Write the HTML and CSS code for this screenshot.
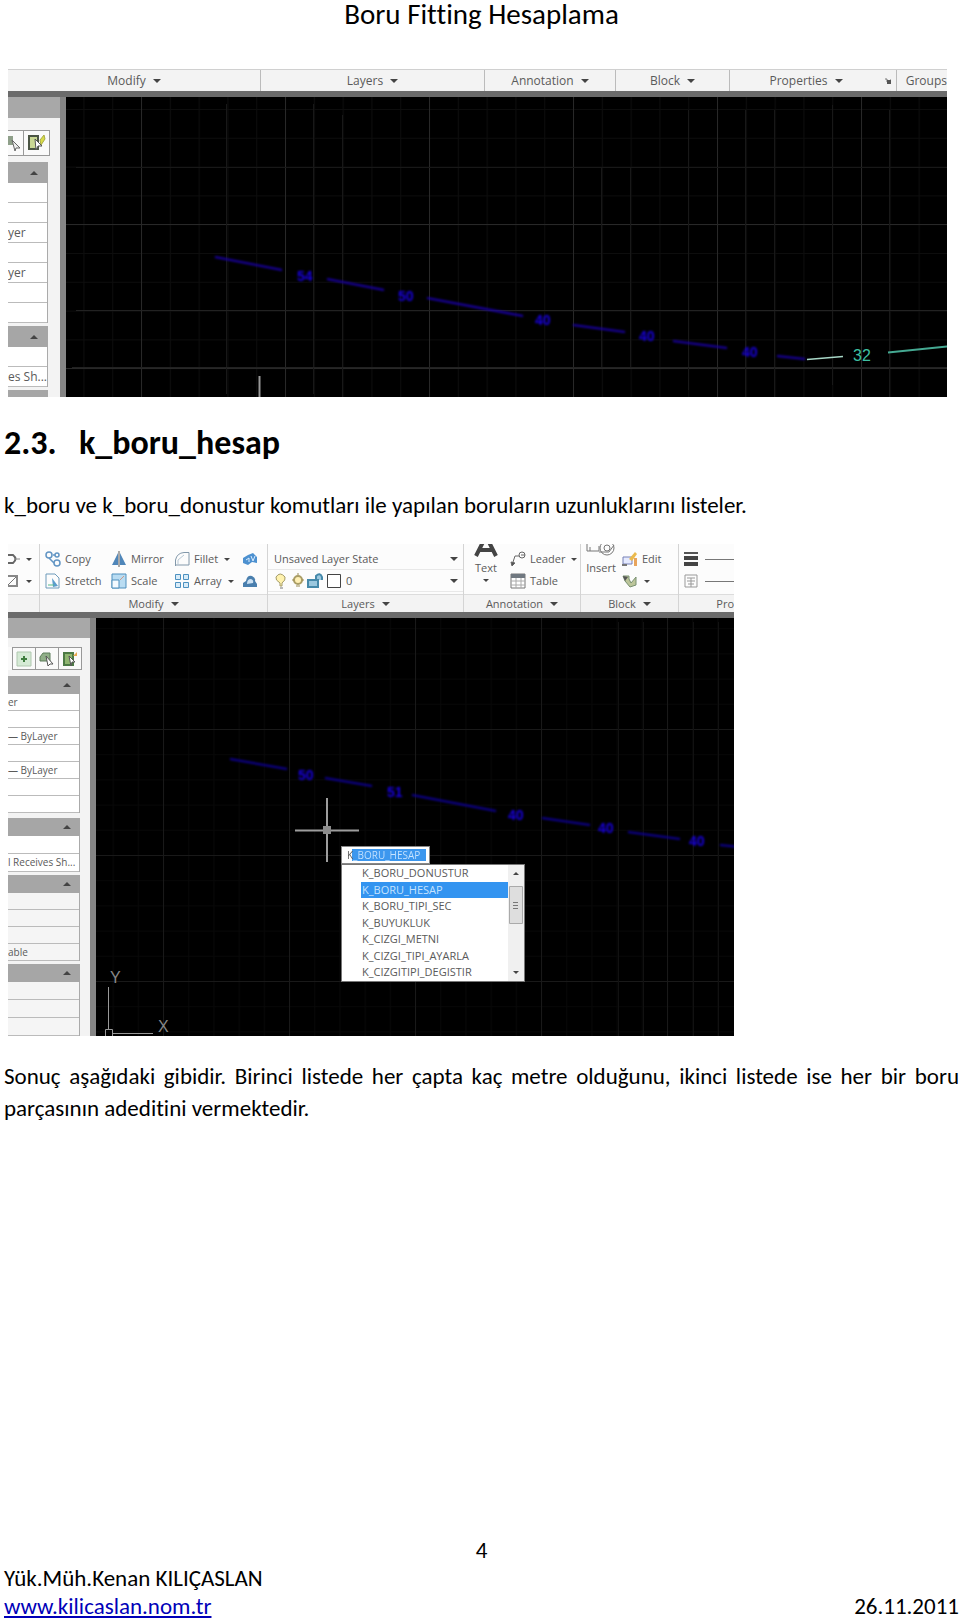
FILE: index.html
```html
<!DOCTYPE html>
<html lang="tr">
<head>
<meta charset="utf-8">
<meta name="viewport" content="width=device-width, initial-scale=1">
<title>Boru Fitting Hesaplama</title>
<link rel="stylesheet" href="styles.css">
</head>
<body>
<div class="page">
  <header class="page-head">Boru Fitting Hesaplama</header>
  <main>
    <figure class="shot shot-wide">
      <div class="ribbon ribbon-titles">
        <button class="title">Modify<i class="caret"></i></button>
        <button class="title">Layers<i class="caret"></i></button>
        <button class="title">Annotation<i class="caret"></i></button>
        <button class="title">Block<i class="caret"></i></button>
        <button class="title w-properties">Properties<i class="caret"></i><svg class="launcher" width="6" height="6"><path d="M0 1h2v3h4V1" fill="none" stroke="#777"/><path d="M2 2h4v4H2z" fill="#555"/></svg></button>
        <button class="title w-groups">Groups</button>
      </div>
      <div class="workspace">
        <aside class="palette palette-narrow">
          <div class="palette-bar"></div>
          <div class="tools">
            <button class="tool tool-cut" aria-label="Select objects"><svg width="14" height="18"><path d="M0 2h5v9H0z" fill="#8fa08a"/><path d="M4 6l8 8-4 0-1 3z" fill="#eee" stroke="#666"/></svg></button>
            <button class="tool" aria-label="Quick select"><svg width="18" height="18"><path d="M1 2h9v13H1z" fill="#c9d894" stroke="#4b5544" stroke-width="2"/><path d="M12 6l4-5 1 4-4 6z" fill="#d9dc4a" stroke="#a8ab44"/><path d="M7 5l7 7-4 0-2 4z" fill="#fff" stroke="#555"/></svg></button>
          </div>
          <div class="group-head"><i class="caret up"></i></div>
          <ul class="rows"><li></li><li></li><li><span>yer</span></li><li></li><li><span>yer</span></li><li></li><li></li></ul>
          <div class="group-head"><i class="caret up"></i></div>
          <ul class="rows"><li></li><li><span>es Sh...</span></li></ul>
          <div class="group-head"></div>
        </aside>
        <div class="canvas">
          <svg class="drawing" role="img" aria-label="Pipe drawing">
            <defs>
              <pattern id="minor-a" x="141" y="109" width="28.8" height="28.8" patternUnits="userSpaceOnUse"><path d="M0 .5h29M.5 0v29" stroke="#0d0d0d"/></pattern>
              <pattern id="major-a" x="141" y="80" width="144" height="144" patternUnits="userSpaceOnUse"><path d="M0 .5h144M.5 0v144" stroke="#282828"/></pattern>
            </defs>
            <g transform="translate(-66 -97)">
              <path d="M66 97h3000v400H66z" fill="#000"/>
              <path d="M66 97h3000v400H66z" fill="url(#minor-a)"/>
              <path d="M66 97h3000v400H66z" fill="url(#major-a)"/>
              <path d="M226.500 104v290M313.500 104v290M342.500 115v290M601.500 168v200M630.500 168v200M688.500 110v280M745.500 110v290M774.500 110v290M832.500 105v280M889.500 110v290" stroke="#181818" fill="none"/>
              <path d="M76 310.500h3000M72 367.500h3000" stroke="#222" fill="none"/>
              <path d="M76 167.500h3000" stroke="#181818" fill="none"/>
              <g class="soft">
                <path d="M215 257l67 13M327 279l57 11M427 298l96 18M573 325l52 7M673 341l54 7M777 356l28 3" stroke="#1a00a8" stroke-width="2" fill="none"/>
                <g class="pipe-label"><text x="297" y="281">54</text><text x="398" y="301">50</text><text x="535" y="325">40</text><text x="639" y="341">40</text><text x="742" y="357">40</text></g>
              </g>
              <path d="M807 359.500l36-3" stroke="#a8d8c8" stroke-width="1.500"/>
              <path d="M888 352.500l59-6 200-20" stroke="#45a992" stroke-width="2" fill="none"/>
              <text x="853" y="361" class="teal-label">32</text>
              <path d="M259.500 376v30" stroke="#999" stroke-width="2"/>
            </g>
          </svg>
        </div>
      </div>
    </figure>

    <h2><span class="num">2.3.</span>k_boru_hesap</h2>
    <p class="lead">k_boru ve k_boru_donustur komutları ile yapılan boruların uzunluklarını listeler.</p>

    <figure class="shot shot-small">
      <div class="ribbon ribbon-full">
        <section class="panel p-edge">
          <div class="panel-body stack">
            <button class="cmd" aria-label="Rotate"><svg width="12" height="16"><path d="M0 4h5q5 4 0 8H0" fill="none" stroke="#666" stroke-width="2"/><path d="M6 8h6" stroke="#888"/></svg><i class="caret tiny"></i></button>
            <button class="cmd" aria-label="Trim"><svg width="12" height="16"><path d="M0 3h9v10H0" fill="none" stroke="#888" stroke-width="2"/><path d="M0 12l8-8" stroke="#777"/></svg><i class="caret tiny"></i></button>
          </div>
          <div class="title"></div>
        </section>
        <section class="panel p-modify">
          <div class="panel-body modify-grid">
            <button class="cmd"><svg width="16" height="16" fill="none" stroke="#6295c4" stroke-width="1.500"><circle cx="4" cy="4" r="3"/><circle cx="12" cy="4" r="2"/><circle cx="12" cy="12" r="3"/><path d="M4 7l5 5M8 4h2"/></svg>Copy</button>
            <button class="cmd"><svg width="16" height="16"><path d="M7 2v12H1zM9 2v12h6z" fill="#4f86b9"/><path d="M8 0v16" stroke="#555"/></svg>Mirror</button>
            <button class="cmd"><svg width="16" height="16" fill="none" stroke="#8298aa"><path d="M1.500 15V9Q3 2 10 1.500h5V14h-14"/><path d="M4 14V9l6-5" stroke="#b8c8d4"/></svg>Fillet<i class="caret tiny"></i></button>
            <button class="cmd" aria-label="Explode"><svg width="16" height="16"><path d="M1 7l5-3 5-2 4 4v6l-5-1-4 3-5-2z" fill="#4d91d0"/><path d="M4 9l3-2v4M9 5l2 5 2-5" stroke="#dceeff" fill="none"/></svg></button>
            <button class="cmd"><svg width="16" height="16" fill="none"><path d="M1 1h9l4 4v10H1z" stroke="#6d9aba"/><path d="M7 5l6 8-5 1z" fill="#5c9dcc"/><path d="M3 12h6" stroke="#5b8"/></svg>Stretch</button>
            <button class="cmd"><svg width="16" height="16" fill="none"><path d="M1 1h14v14H1z" fill="#b9dcf2" stroke="#4f8fbd"/><path d="M1 7h7v8H1z" fill="#f4faff" stroke="#4f8fbd"/><path d="M9 7l4-4" stroke="#c98"/></svg>Scale</button>
            <button class="cmd"><svg width="16" height="16" fill="#d9ecf8" stroke="#4d91c0"><path d="M1.500 1.500h5v5h-5zM9.500 1.500h5v5h-5zM1.500 9.500h5v5h-5zM9.500 9.500h5v5h-5z"/></svg>Array<i class="caret tiny"></i></button>
            <button class="cmd" aria-label="Offset"><svg width="16" height="16"><path d="M1 14v-4l3-2q1-6 6-5 4 2 3 5l2 3v3z" fill="#4a7fae"/><path d="M5 11q0-5 4-5 3 1 2 4z" fill="#cde2f4"/></svg></button>
          </div>
          <button class="title">Modify<i class="caret"></i></button>
        </section>
        <section class="panel p-layers">
          <div class="panel-body stack">
            <div class="combo"><select aria-label="Layer state"><option>Unsaved Layer State</option></select><i class="caret"></i></div>
            <button class="combo layer-combo">
              <svg width="68" height="16" fill="none"><path d="M6 13V10Q1 7 2 4q4-6 9 0 1 3-3 6v3z" fill="#fff2ae" stroke="#a49b69"/><path d="M6 15h3" stroke="#777"/><circle cx="24" cy="7" r="4" fill="#fff0b5" stroke="#aa9d65" stroke-width="2"/><path d="M22 13h4M24 0v2M18 7h2M28 7h2" stroke="#998b55"/><path d="M34 7h10v7H34zM42 7V3q4-4 6 1v3" fill="#9bc8df" stroke="#4689aa" stroke-width="2"/><path d="M53.500 1.500h13v13h-13z" fill="#fff" stroke="#444"/></svg>
              <span>0</span><i class="caret"></i>
            </button>
          </div>
          <button class="title">Layers<i class="caret"></i></button>
        </section>
        <section class="panel p-annotation">
          <div class="panel-body split">
            <button class="big"><svg width="24" height="13"><path d="M2 12L9-2h6l7 14M6 6h12" fill="none" stroke="#444" stroke-width="4"/></svg>Text<i class="caret tiny"></i></button>
            <div class="stack">
              <button class="cmd"><svg width="16" height="16" fill="none" stroke="#666"><path d="M2 14L5 5h4"/><path d="M1 11l1 4 3-3z" fill="#555"/><circle cx="12" cy="4" r="3"/><path d="M11 4h4"/></svg>Leader<i class="caret tiny"></i></button>
              <button class="cmd"><svg width="16" height="16"><path d="M1 1h14v14H1z" fill="#fff" stroke="#777"/><path d="M1 1h14v4H1z" fill="#707880"/><path d="M1 8h14M1 12h14M6 5v10M11 5v10" stroke="#aaa"/></svg>Table</button>
            </div>
          </div>
          <button class="title">Annotation<i class="caret"></i></button>
        </section>
        <section class="panel p-block">
          <div class="panel-body split">
            <button class="big"><svg width="30" height="13" fill="none" stroke="#777"><path d="M1 0v7h12V2M4 7V3"/><circle cx="21" cy="4" r="7"/><circle cx="21" cy="4" r="3"/><path d="M13 8h10l5-7"/></svg>Insert</button>
            <div class="stack">
              <button class="cmd"><svg width="16" height="16"><path d="M1 6h9v7H1z" fill="#e5eaff" stroke="#7780b5"/><path d="M7 8l6-7 2 2-5 7z" fill="#ebba4c"/><path d="M12 7v8h3V7z" fill="#e8a45c"/><path d="M0 14h5" stroke="#777" stroke-width="2"/></svg>Edit</button>
              <button class="cmd" aria-label="Attributes"><svg width="16" height="16"><path d="M1 3h6v3l2 4 5-6v8l-6 2-5-6z" fill="#bcc59a" stroke="#789070"/><path d="M1 3l5 1-3 4z" fill="#555"/></svg><i class="caret tiny"></i></button>
            </div>
          </div>
          <button class="title">Block<i class="caret"></i></button>
        </section>
        <section class="panel p-properties">
          <div class="panel-body stack">
            <button class="cmd prop" aria-label="Line weight"><svg width="14" height="16"><path d="M0 2h14" stroke="#555" stroke-width="2"/><path d="M0 7h14M0 13h14" stroke="#444" stroke-width="4"/></svg><i class="rule"></i></button>
            <button class="cmd prop" aria-label="Line type"><svg width="14" height="16" fill="none" stroke="#999"><path d="M1 2h12v12H1zM3 5h8M3 8h8M7 5v9M4 11h6"/></svg><i class="rule"></i></button>
          </div>
          <button class="title at-end">Pro</button>
        </section>
      </div>
      <div class="workspace">
        <aside class="palette palette-mid">
          <div class="palette-bar"></div>
          <div class="tools">
            <button class="tool tool-sliver" aria-label="Toggle"></button>
            <button class="tool" aria-label="Pick add"><svg width="16" height="16"><path d="M1 1h14v14H1z" fill="#d5ead5" stroke="#b0c8b0"/><path d="M8 5v6M5 8h6" stroke="#3f7d3f" stroke-width="2"/></svg></button>
            <button class="tool" aria-label="Select objects"><svg width="16" height="16"><path d="M4 2h7v8H1V6z" fill="#8fae87" stroke="#5d7d5a"/><path d="M7 5l7 8-3 0-2 2z" fill="#fff" stroke="#555"/></svg></button>
            <button class="tool" aria-label="Quick select"><svg width="16" height="16"><path d="M2 2h9v12H2z" fill="#8fb570" stroke="#4c7a44" stroke-width="2"/><path d="M11 5l4-4v4z" fill="#e8a850"/><path d="M7 5l6 6-3 0-1 4z" fill="#fff" stroke="#555"/></svg></button>
          </div>
          <div class="group-head"><i class="caret up"></i></div>
          <ul class="rows dense loose"><li><span>er</span></li><li></li><li><span>— ByLayer</span></li><li></li><li><span>— ByLayer</span></li><li></li><li></li></ul>
          <div class="group-head"><i class="caret up"></i></div>
          <ul class="rows"><li></li><li><span>l Receives Sh...</span></li></ul>
          <div class="group-head"><i class="caret up"></i></div>
          <ul class="rows dense shaded"><li></li><li></li><li></li><li><span>able</span></li></ul>
          <div class="group-head"><i class="caret up"></i></div>
          <ul class="rows shaded"><li></li><li></li><li></li></ul>
        </aside>
        <div class="canvas">
          <svg class="drawing" role="img" aria-label="Pipe drawing with cursor">
            <defs>
              <pattern id="minor-b" x="163" y="729" width="25.200" height="25.200" patternUnits="userSpaceOnUse"><path d="M0 .5h26M.5 0v26" stroke="#080808"/></pattern>
              <pattern id="major-b" x="163" y="729" width="126" height="126" patternUnits="userSpaceOnUse"><path d="M0 .5h126M.5 0v126" stroke="#191919"/></pattern>
            </defs>
            <g transform="translate(-96 -618)">
              <path d="M96 618h3000v500H96z" fill="#000"/>
              <path d="M96 618h3000v500H96z" fill="url(#minor-b)"/>
              <path d="M96 618h3000v500H96z" fill="url(#major-b)"/>
              <path d="M618.500 622v420M643.500 622v420M693.500 622v420M718.500 622v420" stroke="#111"/>
              <g class="soft">
                <path d="M230 759l57 10M325 778l47 8M412 795l84 16M542 818l48 7M628 832l52 7M720 845l20 2" stroke="#0e0098" stroke-width="2" fill="none"/>
                <g class="pipe-label"><text x="298" y="780">50</text><text x="387" y="797">51</text><text x="508" y="820">40</text><text x="598" y="833">40</text><text x="689" y="846">40</text></g>
              </g>
              <path d="M295 830.500h64M327 798v64" stroke="#9d9d9d" stroke-width="2"/>
              <path d="M323 826h8v8h-8z" fill="#8b8b8b"/>
              <path d="M108.500 987v43M112 1033.500h41M105.500 1029.500h7v7h-7z" stroke="#999" fill="none"/>
              <g class="axis"><text x="110" y="983">Y</text><text x="158" y="1032">X</text></g>
            </g>
          </svg>
          <div class="prompt">
            <input class="prompt-input" type="text" value="K_BORU_HESAP" aria-label="Command">
            <div class="prompt-list">
              <ul role="listbox" aria-label="Commands">
                <li role="option">K_BORU_DONUSTUR</li>
                <li role="option" aria-selected="true" class="is-selected">K_BORU_HESAP</li>
                <li role="option">K_BORU_TIPI_SEC</li>
                <li role="option">K_BUYUKLUK</li>
                <li role="option">K_CIZGI_METNI</li>
                <li role="option">K_CIZGI_TIPI_AYARLA</li>
                <li role="option">K_CIZGITIPI_DEGISTIR</li>
              </ul>
              <div class="scroll"><i class="caret tiny up"></i><svg class="thumb" width="14" height="38"><path d="M.5 .5h13v37H.5z" fill="#dedede" stroke="#aaa"/><path d="M4 16.500h5M4 19.500h5M4 22.500h5" stroke="#777"/></svg><i class="caret tiny"></i></div>
            </div>
          </div>
        </div>
      </div>
    </figure>

    <p class="result">Sonuç aşağıdaki gibidir. Birinci listede her çapta kaç metre olduğunu, ikinci listede ise her bir boru parçasının adeditini vermektedir.</p>
  </main>
  <footer class="page-foot">
    <div class="page-number">4</div>
    <div>Yük.Müh.Kenan KILIÇASLAN</div>
    <div class="foot-row"><a href="http://www.kilicaslan.nom.tr">www.kilicaslan.nom.tr</a><time datetime="2011-11-26">26.11.2011</time></div>
  </footer>
</div>
</body>
</html>
```
FILE: styles.css
```css
* { box-sizing: border-box; }

body {
  margin: 0;
  background: #fff;
  color: #000;
  font-family: Carlito, Calibri, Lato, sans-serif;
  font-size: 23px;
  font-variant-ligatures: none;
  line-height: 32px;
}

.page {
  display: flex;
  flex-direction: column;
  min-height: 100vh;
  padding: 0 1px 0 4px;
}

.page-head { font-size: 29px; line-height: 28px; text-align: center; }

main { flex: 1; }

button, input, select {
  margin: 0;
  padding: 0;
  border: 0;
  background: none;
  color: inherit;
  font: inherit;
}

ul { margin: 0; padding: 0; list-style: none; }
svg { display: block; flex: none; }

h2 {
  display: flex;
  margin: 26px 0 0;
  font-size: 34px;
  line-height: 40px;
}
.num { width: 75px; }

p { margin: 0; }
.lead { margin-top: 26px; }
.result { margin-top: 24px; text-align: justify; }

/* Application windows */
.shot {
  display: flex;
  flex-direction: column;
  overflow: hidden;
  color: #5a5a5a;
  font-family: "Open Sans", "Noto Sans", sans-serif;
  font-size: 12px;
  line-height: 16px;
}
.shot-wide { margin: 41px 12px 0 4px; }
.shot-small { width: 726px; max-width: 100%; margin: 23px 0 0 4px; font-size: 11px; }

.caret {
  flex: none;
  width: 0;
  height: 0;
  border: 4px solid transparent;
  border-top-color: #444;
  border-bottom-width: 0;
}
.caret.tiny { border-width: 3px 3px 0; }
.caret.up { transform: rotate(180deg); }

.ribbon {
  display: flex;
  background: #f3f3f3;
  border-bottom: 6px solid #6b6b6b;
}
.title {
  display: flex;
  align-items: center;
  justify-content: center;
  gap: 7px;
  white-space: nowrap;
}
.ribbon-titles {
  display: grid;
  grid-template-columns: 253fr 224fr 131fr 114fr 167fr 50fr;
  border-top: 1px solid #d0d0d0;
}
.ribbon-titles .title { position: relative; height: 21px; border-right: 1px solid #bbb; }
.ribbon-titles .w-groups { border: 0; justify-content: flex-end; }
.ribbon-titles .w-properties { padding-right: 14px; }
.launcher { position: absolute; right: 5px; top: 8px; }

.panel { display: flex; flex-direction: column; border-right: 1px solid #d4d4d4; overflow: hidden; }
.panel .title { height: 18px; border-top: 1px solid #dcdcdc; }
.panel-body { height: 50px; padding-top: 4px; background: #fcfcfc; }
.p-edge { flex: 0 0 32px; }
.p-modify { flex: 0 0 228px; }
.p-layers { flex: 0 0 196px; }
.p-annotation { flex: 0 0 117px; }
.p-block { flex: 0 0 98px; }
.p-properties { flex: 1; border: 0; }
.panel .at-end { justify-content: flex-end; }

.stack { display: flex; flex-direction: column; }
.cmd { display: flex; align-items: center; gap: 4px; height: 22px; white-space: nowrap; }
.cmd .caret { margin-left: 2px; }
.modify-grid {
  display: grid;
  grid-template-columns: 66px 63px 68px 20px;
  grid-auto-rows: 22px;
  padding-left: 5px;
}
.split { display: flex; }
.p-annotation .split { gap: 12px; padding-left: 10px; }
.p-block .split { gap: 6px; padding-left: 5px; }
.panel-body.split { padding-top: 0; }
.split .stack { padding-top: 4px; }
.big { display: flex; flex-direction: column; align-items: center; justify-content: flex-start; width: 24px; gap: 3px; }
.p-block .big { width: 30px; }

.combo {
  display: flex;
  align-items: center;
  justify-content: space-between;
  height: 22px;
  padding: 0 5px 0 6px;
  border-bottom: 1px solid #e8e8e8;
}
.combo select { flex: 1; appearance: none; }
.layer-combo { justify-content: flex-start; gap: 4px; }
.layer-combo .caret { margin-left: auto; }
.prop { gap: 7px; padding-left: 5px; }
.rule { flex: 1; height: 1px; background: #777; }

.workspace { display: flex; align-items: stretch; }
.palette {
  display: flex;
  flex: none;
  flex-direction: column;
  overflow: hidden;
  background: #f3f3f3;
  border-right: 6px solid #858585;
}
.palette-narrow { width: 58px; height: 300px; }
.palette-mid { width: 88px; height: 418px; }
.palette > * { flex: none; }
.palette-bar { height: 21px; background: #a8a8a8; }
.palette-mid .palette-bar { height: 20px; }
.tools { display: flex; margin: 12px 0 6px; }
.palette-mid .tools { margin: 9px 0 6px; }
.tool {
  display: flex;
  align-items: center;
  justify-content: center;
  width: 26px;
  height: 26px;
  background: #fafafa;
  border: 1px solid #999;
  border-left: 0;
}
.tool-cut { width: 16px; justify-content: flex-start; }
.palette-mid .tool { width: 23px; height: 23px; }
.palette-mid .tool-sliver { width: 5px; border-width: 0 1px; }

.group-head {
  display: flex;
  align-items: center;
  justify-content: flex-end;
  height: 21px;
  padding-right: 10px;
  margin-right: 12px;
  background: #a6a6a6;
}
.palette-mid .group-head { height: 18px; padding-right: 9px; margin-right: 10px; }
.rows { margin: 0 12px 3px 0; background: #fff; border-right: 1px solid #aaa; }
.rows li { height: 20px; border-bottom: 1px solid #bbb; line-height: 19px; white-space: nowrap; }
.palette-mid .rows { margin-right: 10px; font-size: 10px; }
.palette-mid .loose { margin-bottom: 5px; }
.palette-mid .rows li { height: 18px; line-height: 17px; }
.palette-mid .dense li { height: 17px; }
.palette .shaded { background: #f5f5f5; }

.canvas { position: relative; flex: 1; min-width: 0; overflow: hidden; background: #000; }
.drawing { width: 100%; height: 100%; }
.soft { filter: blur(1px); }
.pipe-label { fill: #1800e0; font: bold 14px "Liberation Sans", sans-serif; }
.teal-label { fill: #3fc0a2; font: 16px "Liberation Sans", sans-serif; }
.axis { fill: #888; font: 16px "Liberation Sans", sans-serif; }

/* Command completion, floating over the drawing */
.prompt { position: absolute; left: 245px; top: 228px; width: 184px; }
.prompt-input {
  display: block;
  width: 89px;
  height: 18px;
  padding-left: 5px;
  border: 1px solid #888;
  color: transparent;
  font-size: 10px;
  background:
    linear-gradient(90deg, #555 11px, #c8e4ff 11px) text,
    linear-gradient(#3c97ee, #3c97ee) 10px 2px / 74px 12px no-repeat,
    #fff;
}
.prompt-list { display: flex; height: 118px; background: #fff; border: 1px solid #777; }
.prompt-list ul { display: grid; flex: 1; grid-auto-rows: 1fr; padding-left: 19px; }
.prompt-list li { padding-left: 1px; white-space: nowrap; }
.prompt-list .is-selected { background: #3394f0; color: #c5e3ff; }
.scroll {
  display: flex;
  flex-direction: column;
  align-items: center;
  justify-content: space-between;
  width: 16px;
  padding: 7px 0;
  background: #f0f0f0;
}
.thumb { margin-bottom: 36px; }

.page-foot { line-height: 28px; }
.page-number { text-align: center; }
.foot-row { display: flex; justify-content: space-between; }
.foot-row a { color: #0000b8; }
```
